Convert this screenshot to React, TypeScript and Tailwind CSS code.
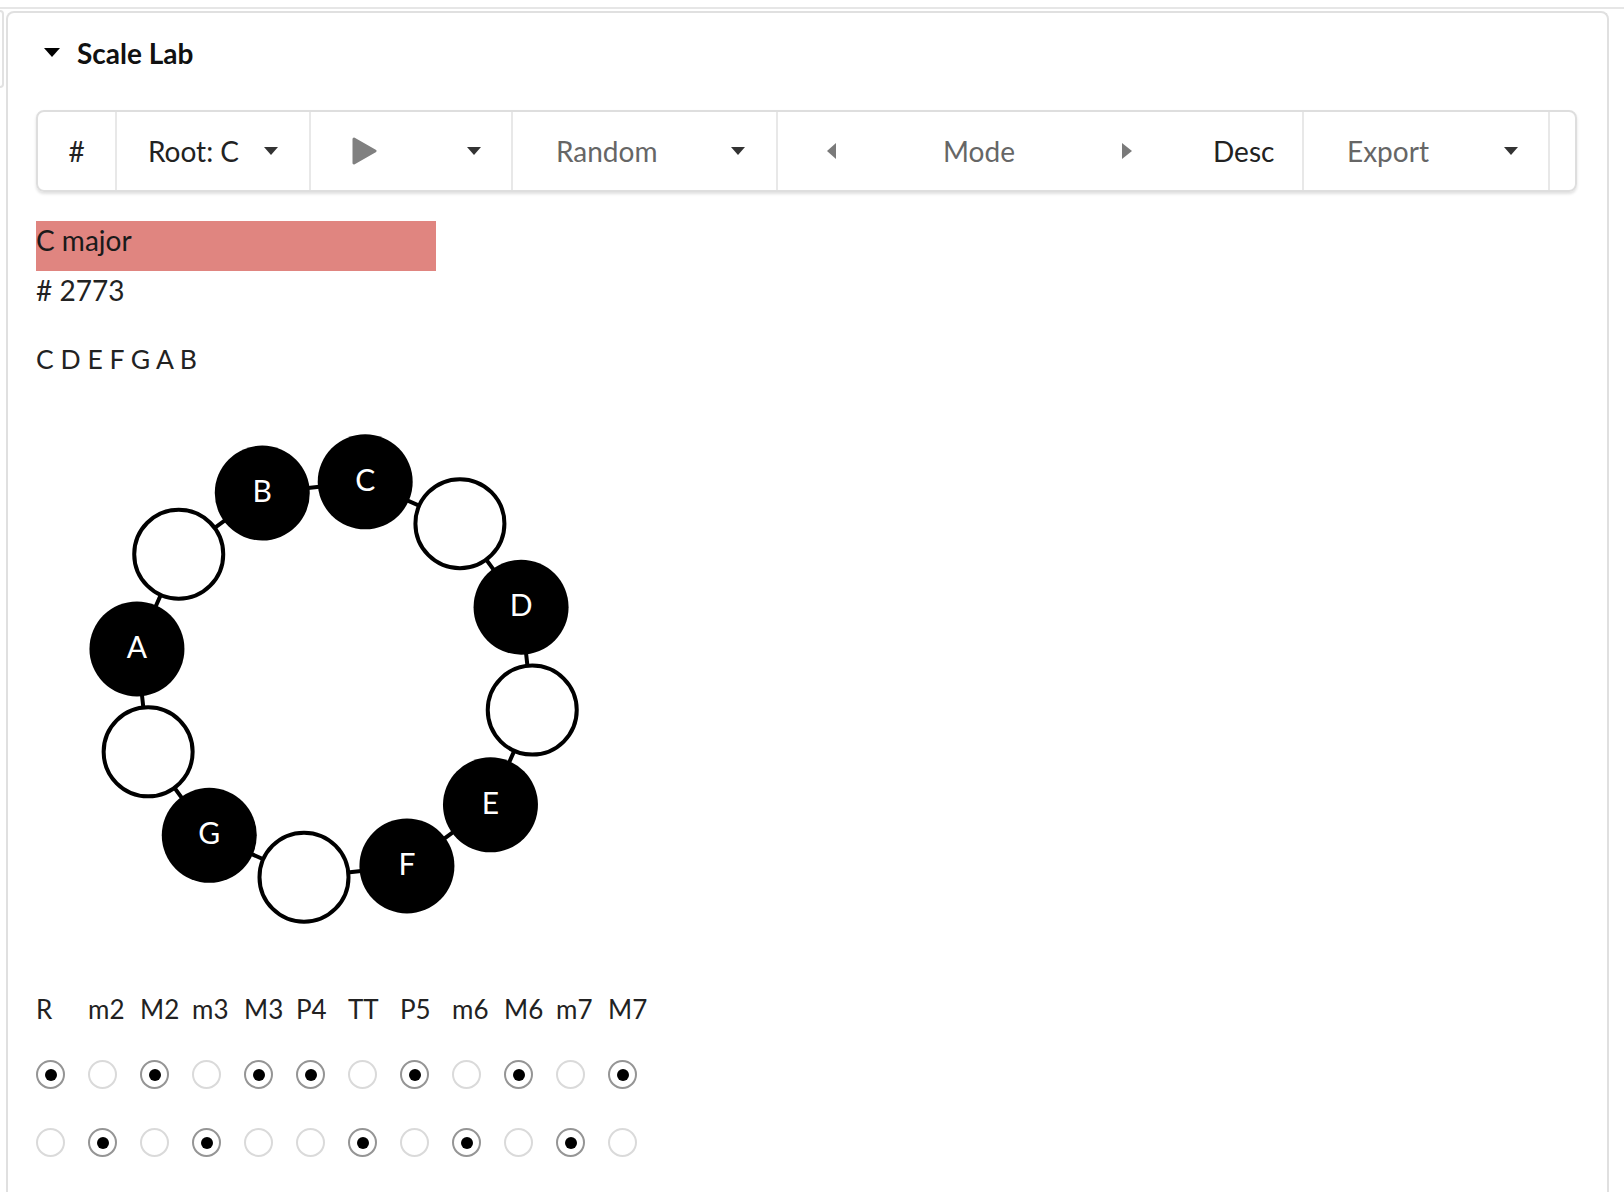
import React from "react";

const NOTES = ["C", "", "D", "", "E", "F", "", "G", "", "A", "", "B"];
const INTERVALS = ["R", "m2", "M2", "m3", "M3", "P4", "TT", "P5", "m6", "M6", "m7", "M7"];
const ROW_ONE = [true, false, true, false, true, true, false, true, false, true, false, true];

function Caret() {
  return (
    <svg width="14" height="8" viewBox="0 0 14 8">
      <polygon points="0,0 14,0 7,8" fill="#333" />
    </svg>
  );
}

function Radio({ checked }: { checked: boolean }) {
  return (
    <div
      className={
        checked
          ? "w-[29px] h-[29px] rounded-full border-2 border-[#959595] flex items-center justify-center"
          : "w-[29px] h-[29px] rounded-full border-2 border-[#dadada]"
      }
    >
      {checked && <div className="w-[12px] h-[12px] rounded-full bg-black" />}
    </div>
  );
}

function ScaleRing() {
  // ring of 12 pitch classes, C near the top, rotated slightly clockwise
  const cx = 298.6;
  const cy = 278.5;
  const pts = NOTES.map((n, i) => {
    const a = ((-81.2 + 30 * i) * Math.PI) / 180;
    return { n, x: cx + 200 * Math.cos(a), y: cy + 200 * Math.sin(a) };
  });
  const poly = pts.map((p) => `${p.x},${p.y}`).join(" ");

  return (
    <svg width="600" height="540" viewBox="0 0 600 540">
      <polygon points={poly} fill="none" stroke="#000" strokeWidth="4" />
      {pts.map((p, i) =>
        p.n ? (
          <g key={i}>
            <circle cx={p.x} cy={p.y} r="47.5" fill="#000" />
            <text
              x={p.x}
              y={p.y + 9}
              textAnchor="middle"
              fill="#fff"
              fontSize="30"
              fontFamily="Lato, sans-serif"
            >
              {p.n}
            </text>
          </g>
        ) : (
          <circle key={i} cx={p.x} cy={p.y} r="44.5" fill="#fff" stroke="#000" strokeWidth="4" />
        )
      )}
    </svg>
  );
}

export default function App() {
  return (
    <div className="w-full h-[1192px] overflow-hidden bg-white text-[#222]" style={{ fontFamily: "Lato, 'Open Sans', sans-serif" }}>
      <div className="h-[2px] mt-[7px] bg-[#e6e6e6] w-full" />
      <div className="flex">
        {/* edge of the neighbouring panel */}
        <div className="w-[4px] h-[78px] mt-[1px] border-2 border-l-0 border-[#e2e2e2] rounded-r-[4px]" />
        <div className="ml-[2px] mt-[2px] w-[1603px] h-[1181px] border-2 border-b-0 border-[#e0e0e0] rounded-t-[8px] pl-[28px]">
          {/* Heading */}
          <div className="mt-[24px] h-[32px] flex items-center">
            <svg width="16" height="9" viewBox="0 0 16 9" className="ml-[8px] -mt-[2px]">
              <polygon points="0,0 16,0 8,9" fill="#000" />
            </svg>
            <span className="ml-[17px] text-[28px] leading-[32px] font-bold text-[#111]">Scale Lab</span>
          </div>

          {/* Toolbar */}
          <div className="mt-[41px] w-[1541px] h-[82px] flex border-2 border-[#dedede] rounded-[8px] shadow-[0_2px_3px_rgba(0,0,0,0.12)] text-[28px]">
            <div className="w-[79px] border-r-2 border-[#e8e8e8] flex items-center justify-center">#</div>
            <div className="w-[194px] border-r-2 border-[#e8e8e8] flex items-center justify-center gap-[25px]">
              <span>Root: C</span>
              <Caret />
            </div>
            <div className="w-[202px] border-r-2 border-[#e8e8e8] flex items-center justify-between pl-[41px] pr-[30px]">
              <svg width="25" height="28" viewBox="0 0 25 28">
                <polygon points="2,2 23,14 2,26" fill="#808080" stroke="#808080" strokeWidth="3" strokeLinejoin="round" />
              </svg>
              <Caret />
            </div>
            <div className="w-[265px] border-r-2 border-[#e8e8e8] flex items-center justify-between pl-[43px] pr-[31px] text-[#666]">
              <span>Random</span>
              <Caret />
            </div>
            <div className="w-[526px] border-r-2 border-[#e8e8e8] flex items-center pl-[49px]">
              <div className="w-[305px] flex items-center justify-between text-[#666]">
                <svg width="9" height="16" viewBox="0 0 9 16">
                  <polygon points="9,0 9,16 0,8" fill="#7a7a7a" />
                </svg>
                <span>Mode</span>
                <svg width="10" height="16" viewBox="0 0 10 16">
                  <polygon points="0,0 10,8 0,16" fill="#7a7a7a" />
                </svg>
              </div>
              <span className="ml-[81px] text-[#222]">Desc</span>
            </div>
            <div className="w-[246px] border-r-2 border-[#e8e8e8] flex items-center justify-between pl-[43px] pr-[30px] text-[#666]">
              <span>Export</span>
              <Caret />
            </div>
            <div className="flex-1" />
          </div>

          {/* Scale info */}
          <div className="mt-[29px] w-[400px] h-[50px] bg-[#e08580] text-[28px] leading-[38px] text-[#1a1a1a]">C major</div>
          <div className="-mt-[2px] text-[28px] leading-[42px]">#&nbsp;2773</div>
          <div className="mt-[27px] text-[26.5px] leading-[42px]">C D E F G A B</div>

          <div className="mt-[21px]">
            <ScaleRing />
          </div>

          {/* Interval grid */}
          <div className="mt-[50px] grid grid-cols-[repeat(12,52px)] text-[26px] leading-[36px]">
            {INTERVALS.map((iv) => (
              <div key={iv}>{iv}</div>
            ))}
          </div>
          <div className="mt-[33px] grid grid-cols-[repeat(12,52px)]">
            {ROW_ONE.map((c, i) => (
              <Radio key={i} checked={c} />
            ))}
          </div>
          <div className="mt-[39px] grid grid-cols-[repeat(12,52px)]">
            {ROW_ONE.map((c, i) => (
              <Radio key={i} checked={!c} />
            ))}
          </div>
        </div>
      </div>
    </div>
  );
}
